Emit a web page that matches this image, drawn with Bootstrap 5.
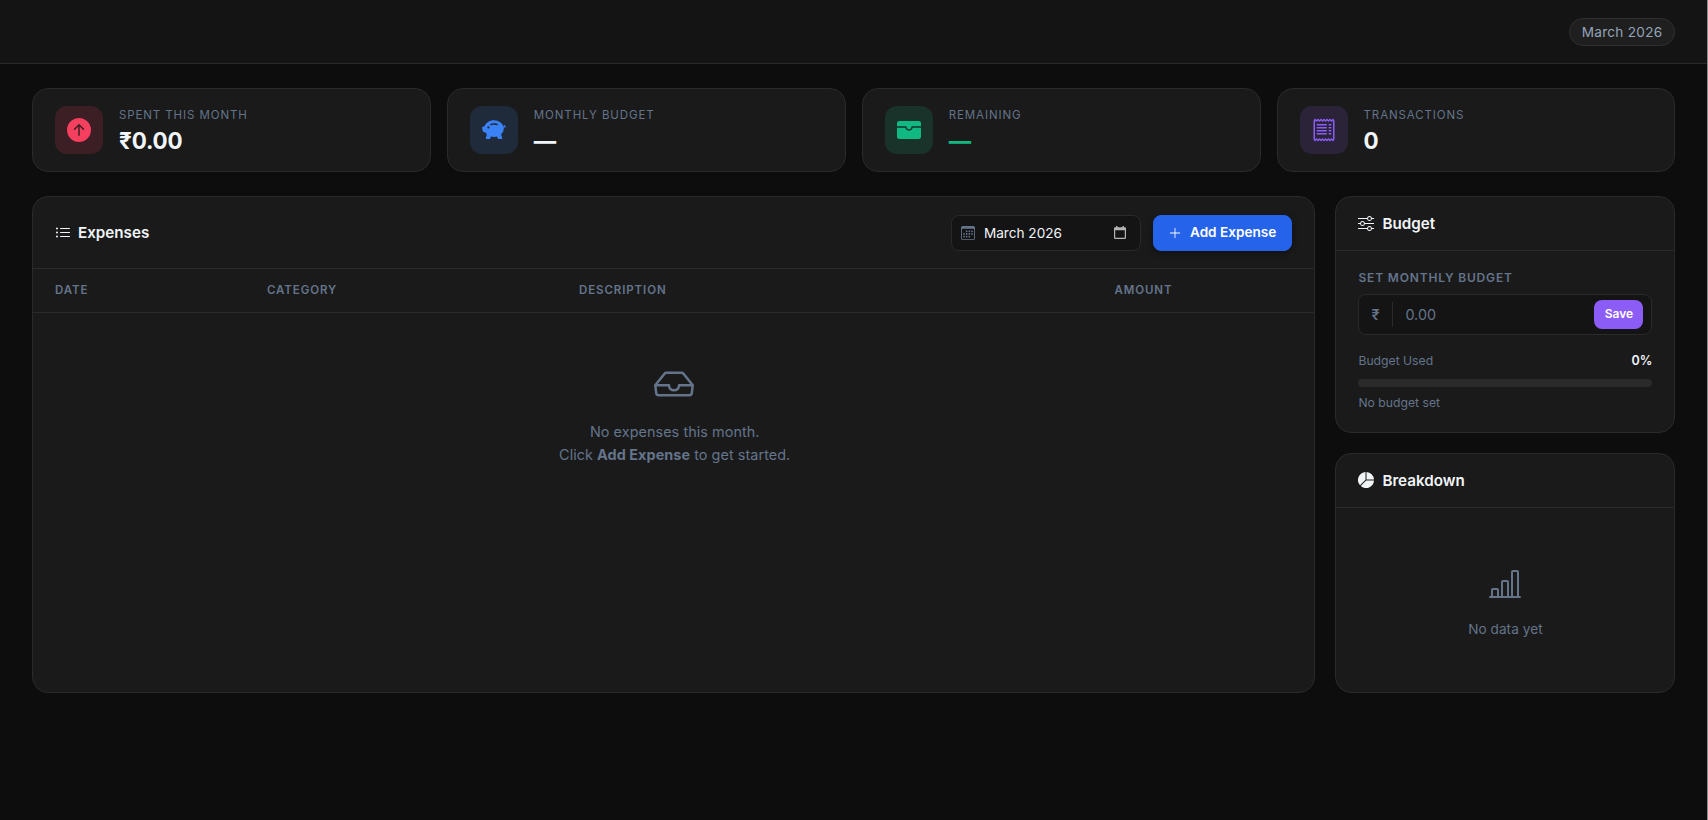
<!DOCTYPE html>
<html lang="en" data-bs-theme="dark">
<head>
<meta charset="utf-8">
<meta name="viewport" content="width=device-width, initial-scale=1">
<title>Expenses</title>
<link href="https://cdn.jsdelivr.net/npm/bootstrap@5.3.0/dist/css/bootstrap.min.css" rel="stylesheet">
<style>
  :root { --line: #2a2a2a; --muted: #64748b; --panel: #1a1a1a; --text: #f1f5f9; }
  body { background: #0d0d0d; color: var(--text); font-family: Inter, "Liberation Sans", sans-serif; font-size: 16px; line-height: 1.5; }
  svg { display: block; fill: currentColor; flex: none; }
  .shell { min-height: 820px; border-right: 1px solid #8a8a8a; }
  .topbar { height: 64px; padding: 0 31.6px 0 32px; background: #141414; border-bottom: 1px solid var(--line); }
  .month-pill { height: 28px; padding: 1px 12px 0; font-size: 13.6px; letter-spacing: .27px; color: #94a3b8; background: #1f1f1f; border: 1px solid #303030; border-radius: 20px; }
  .content { padding: 24px 31.6px 24px 32px; }
  .stats { display: grid; grid-template-columns: repeat(4, 1fr); gap: 16px; margin-bottom: 24px; }
  .panel { background: var(--panel); border: 1px solid var(--line); border-radius: 16px; overflow: hidden; }
  .stat { height: 84px; padding: 0 22px; gap: 16px; }
  .stat-icon { width: 48px; height: 48px; border-radius: 12px; }
  .stat-label { font-size: 11.5px; line-height: 18px; letter-spacing: .89px; color: var(--muted); margin-bottom: 3px; }
  .stat-value { font-size: 22.4px; font-weight: 700; line-height: 27px; letter-spacing: -.15px; }
  .red { color: #f43f5e; background: #3b1f24; } .blue { color: #3b82f6; background: #1f2a3a; }
  .green { color: #10b981; background: #19322a; } .violet { color: #8b5cf6; background: #2b2439; }
  .main-grid { display: grid; grid-template-columns: minmax(0, 1fr) 340px; gap: 20px; height: 497px; }
  .panel-head { padding: 0 22px; border-bottom: 1px solid var(--line); font-size: 15.2px; font-weight: 600; gap: 8px; }
  .expense-head { height: 72px; gap: 7px; }
  .panel-head > span { padding-top: 2px; }
  .side-head { height: 54px; }
  .side-head svg { margin-bottom: 1px; }
  .month-field { width: 190px; height: 36px; padding: 0 14px 0 9px; gap: 9px; background: #141414; border: 1px solid var(--line); border-radius: 8px; color: var(--muted); }
  .month-name { color: var(--text); font-size: 13.6px; font-weight: 400; line-height: 20px; }
  .picker-mark { color: #b4b4b4; }
  .add-btn { width: 139.5px; height: 36px; padding: 0 1px 0 0; gap: 8px; font-size: 13.6px; font-weight: 600; --bs-btn-bg: #2563eb; --bs-btn-border-color: #2563eb; border-radius: 8px; box-shadow: 0 2px 6px rgba(0,0,0,.4); }
  .ledger { table-layout: fixed; width: 100%; border-collapse: collapse; }
  .ledger th { height: 43px; padding: 0 22px; border-bottom: 1px solid var(--line); color: var(--muted); font-size: 11.5px; font-weight: 600; letter-spacing: .9px; }
  .empty { color: var(--muted); text-align: center; }
  .empty-expenses { padding-top: 51px; font-size: 14.4px; line-height: 23px; letter-spacing: .06px; }
  .empty-expenses p { margin: 16px 0 0; padding-left: 2px; }
  .empty-data { font-size: 13.6px; line-height: 20px; padding-top: 60px; }
  .empty-data p { margin: 19px 0 0; letter-spacing: .06px; }
  .budget-body { padding: 17px 22px 0; color: var(--muted); }
  .field-label { font-size: 12px; line-height: 20px; font-weight: 600; letter-spacing: .83px; }
  .budget-field { height: 41px; margin-top: 6px; padding: 0 8px 0 12px; background: #141414; border: 1px solid var(--line); border-radius: 8px; }
  .currency { width: 22px; height: 25px; border-right: 1px solid var(--line); font-size: 14.4px; line-height: 25px; font-weight: 600; }
  .budget-field input { flex: 1; min-width: 0; padding: 0 12px; border: 0; outline: 0; background: transparent; color: var(--text); font-size: 14.4px; }
  .budget-field input::placeholder { color: var(--muted); opacity: 1; }
  .save-btn { width: 49px; height: 29px; padding: 0 0 1px; font-size: 12px; font-weight: 600; --bs-btn-color: #fff; --bs-btn-bg: #8b5cf6; border: 0; border-radius: 8px; }
  .usage { margin-top: 16px; font-size: 12.2px; line-height: 20px; }
  .usage strong { color: var(--text); font-weight: 600; font-size: 12.5px; }
  .meter { --bs-progress-height: 8px; --bs-progress-bg: #2a2a2a; --bs-progress-border-radius: 4px; margin-top: 8px; }
  .hint { margin-top: 6px; font-size: 12.2px; line-height: 20px; }
</style>
</head>
<body>
<div class="shell">
  <header class="topbar d-flex align-items-center justify-content-end">
    <span class="month-pill d-flex align-items-center">March 2026</span>
  </header>

  <main class="content">
    <section class="stats">
      <div class="panel stat d-flex align-items-center">
        <div class="stat-icon red d-flex align-items-center justify-content-center">
          <svg width="24" height="24" viewBox="0 0 16 16"><path d="M16 8A8 8 0 1 0 0 8a8 8 0 0 0 16 0zm-7.5 3.5a.5.5 0 0 1-1 0V5.707L5.354 7.854a.5.5 0 1 1-.708-.708l3-3a.5.5 0 0 1 .708 0l3 3a.5.5 0 0 1-.708.708L8.5 5.707V11.5z"/></svg>
        </div>
        <div><div class="stat-label">SPENT THIS MONTH</div><div class="stat-value">₹0.00</div></div>
      </div>
      <div class="panel stat d-flex align-items-center">
        <div class="stat-icon blue d-flex align-items-center justify-content-center">
          <svg width="24" height="24" viewBox="0 0 16 16"><path d="M7.964 1.527c-2.977 0-5.571 1.704-6.32 4.125h-.55A1 1 0 0 0 .11 6.824l.254 1.46a1.5 1.5 0 0 0 1.478 1.243h.263c.3.513.688.978 1.145 1.382l-.729 2.477a.5.5 0 0 0 .48.641h2a.5.5 0 0 0 .471-.332l.482-1.351c.635.173 1.31.267 2.011.267.707 0 1.388-.095 2.028-.272l.543 1.372a.5.5 0 0 0 .465.316h2a.5.5 0 0 0 .478-.645l-.761-2.506C13.81 9.895 14.5 8.559 14.5 7.069c0-.145-.007-.29-.02-.431.261-.11.508-.266.705-.444.315.306.815.306.815-.417 0 .223-.5.223-.461-.026a.95.95 0 0 0 .09-.255.7.7 0 0 0-.202-.645.58.58 0 0 0-.707-.098.735.735 0 0 0-.375.562c-.024.243.082.48.32.654a2.112 2.112 0 0 1-.259.153c-.534-2.664-3.284-4.595-6.442-4.595Zm7.173 3.876a.565.565 0 0 1-.098.21.704.704 0 0 1-.044-.025c-.146-.09-.157-.175-.152-.223a.236.236 0 0 1 .117-.173c.049-.027.08-.021.113.012a.202.202 0 0 1 .064.199Zm-8.999-.65a.5.5 0 1 1-.276-.96A7.613 7.613 0 0 1 7.964 3.5c.763 0 1.497.11 2.18.315a.5.5 0 1 1-.287.958A6.602 6.602 0 0 0 7.964 4.5c-.64 0-1.255.09-1.826.254ZM5 6.25a.75.75 0 1 1-1.5 0 .75.75 0 0 1 1.5 0Z"/></svg>
        </div>
        <div><div class="stat-label">MONTHLY BUDGET</div><div class="stat-value">—</div></div>
      </div>
      <div class="panel stat d-flex align-items-center">
        <div class="stat-icon green d-flex align-items-center justify-content-center">
          <svg width="24" height="24" viewBox="0 0 16 16"><path d="M1.5 2A1.5 1.5 0 0 0 0 3.5v2h6a.5.5 0 0 1 .5.5c0 .253.08.644.306.958.207.288.557.542 1.194.542.637 0 .987-.254 1.194-.542.226-.314.306-.705.306-.958a.5.5 0 0 1 .5-.5h6v-2A1.5 1.5 0 0 0 14.5 2h-13z"/><path d="M16 6.5h-5.551a2.678 2.678 0 0 1-.443 1.042C9.613 8.088 8.963 8.5 8 8.5c-.963 0-1.613-.412-2.006-.958A2.679 2.679 0 0 1 5.551 6.5H0v6A1.5 1.5 0 0 0 1.5 14h13a1.5 1.5 0 0 0 1.5-1.5v-6z"/></svg>
        </div>
        <div><div class="stat-label">REMAINING</div><div class="stat-value" style="color:#10b981">—</div></div>
      </div>
      <div class="panel stat d-flex align-items-center">
        <div class="stat-icon violet d-flex align-items-center justify-content-center">
          <svg width="24" height="24" viewBox="0 0 16 16"><path d="M1.92.506a.5.5 0 0 1 .434.14L3 1.293l.646-.647a.5.5 0 0 1 .708 0L5 1.293l.646-.647a.5.5 0 0 1 .708 0L7 1.293l.646-.647a.5.5 0 0 1 .708 0L9 1.293l.646-.647a.5.5 0 0 1 .708 0l.646.647.646-.647a.5.5 0 0 1 .708 0l.646.647.646-.647a.5.5 0 0 1 .801.13l.5 1A.5.5 0 0 1 15 2v12a.5.5 0 0 1-.053.224l-.5 1a.5.5 0 0 1-.8.13L13 14.707l-.646.647a.5.5 0 0 1-.708 0L11 14.707l-.646.647a.5.5 0 0 1-.708 0L9 14.707l-.646.647a.5.5 0 0 1-.708 0L7 14.707l-.646.647a.5.5 0 0 1-.708 0L5 14.707l-.646.647a.5.5 0 0 1-.708 0L3 14.707l-.646.647a.5.5 0 0 1-.801-.13l-.5-1A.5.5 0 0 1 1 14V2a.5.5 0 0 1 .053-.224l.5-1a.5.5 0 0 1 .367-.27zm.217 1.338L2 2.118v11.764l.137.274.51-.51a.5.5 0 0 1 .707 0l.646.647.646-.646a.5.5 0 0 1 .708 0l.646.646.646-.646a.5.5 0 0 1 .708 0l.646.646.646-.646a.5.5 0 0 1 .708 0l.646.646.646-.646a.5.5 0 0 1 .708 0l.646.646.646-.646a.5.5 0 0 1 .708 0l.509.509.137-.274V2.118l-.137-.274-.51.51a.5.5 0 0 1-.707 0L12 1.707l-.646.647a.5.5 0 0 1-.708 0L10 1.707l-.646.647a.5.5 0 0 1-.708 0L8 1.707l-.646.647a.5.5 0 0 1-.708 0L6 1.707l-.646.647a.5.5 0 0 1-.708 0L4 1.707l-.646.647a.5.5 0 0 1-.708 0l-.509-.51z"/><path d="M3 4.5a.5.5 0 0 1 .5-.5h6a.5.5 0 1 1 0 1h-6a.5.5 0 0 1-.5-.5zm0 2a.5.5 0 0 1 .5-.5h6a.5.5 0 1 1 0 1h-6a.5.5 0 0 1-.5-.5zm0 2a.5.5 0 0 1 .5-.5h6a.5.5 0 1 1 0 1h-6a.5.5 0 0 1-.5-.5zm0 2a.5.5 0 0 1 .5-.5h6a.5.5 0 0 1 0 1h-6a.5.5 0 0 1-.5-.5zm8-6a.5.5 0 0 1 .5-.5h1a.5.5 0 0 1 0 1h-1a.5.5 0 0 1-.5-.5zm0 2a.5.5 0 0 1 .5-.5h1a.5.5 0 0 1 0 1h-1a.5.5 0 0 1-.5-.5zm0 2a.5.5 0 0 1 .5-.5h1a.5.5 0 0 1 0 1h-1a.5.5 0 0 1-.5-.5zm0 2a.5.5 0 0 1 .5-.5h1a.5.5 0 0 1 0 1h-1a.5.5 0 0 1-.5-.5z"/></svg>
        </div>
        <div><div class="stat-label">TRANSACTIONS</div><div class="stat-value">0</div></div>
      </div>
    </section>

    <section class="main-grid">
      <div class="panel">
        <div class="panel-head expense-head d-flex align-items-center">
          <svg width="16" height="16" viewBox="0 0 16 16"><path fill-rule="evenodd" d="M5 11.5a.5.5 0 0 1 .5-.5h9a.5.5 0 0 1 0 1h-9a.5.5 0 0 1-.5-.5zm0-4a.5.5 0 0 1 .5-.5h9a.5.5 0 0 1 0 1h-9a.5.5 0 0 1-.5-.5zm0-4a.5.5 0 0 1 .5-.5h9a.5.5 0 0 1 0 1h-9a.5.5 0 0 1-.5-.5zm-3 1a1 1 0 1 0 0-2 1 1 0 0 0 0 2zm0 4a1 1 0 1 0 0-2 1 1 0 0 0 0 2zm0 4a1 1 0 1 0 0-2 1 1 0 0 0 0 2z"/></svg>
          <span>Expenses</span>
          <div class="d-flex align-items-center ms-auto" style="gap:12px">
            <div class="month-field d-flex align-items-center">
              <svg width="14" height="14" viewBox="0 0 16 16"><path d="M14 0H2a2 2 0 0 0-2 2v12a2 2 0 0 0 2 2h12a2 2 0 0 0 2-2V2a2 2 0 0 0-2-2zM1 3.857C1 3.384 1.448 3 2 3h12c.552 0 1 .384 1 .857v10.286c0 .473-.448.857-1 .857H2c-.552 0-1-.384-1-.857V3.857z"/><path d="M6.5 7a1 1 0 1 0 0-2 1 1 0 0 0 0 2zm3 0a1 1 0 1 0 0-2 1 1 0 0 0 0 2zm3 0a1 1 0 1 0 0-2 1 1 0 0 0 0 2zm-9 3a1 1 0 1 0 0-2 1 1 0 0 0 0 2zm3 0a1 1 0 1 0 0-2 1 1 0 0 0 0 2zm3 0a1 1 0 1 0 0-2 1 1 0 0 0 0 2zm3 0a1 1 0 1 0 0-2 1 1 0 0 0 0 2zm-9 3a1 1 0 1 0 0-2 1 1 0 0 0 0 2zm3 0a1 1 0 1 0 0-2 1 1 0 0 0 0 2zm3 0a1 1 0 1 0 0-2 1 1 0 0 0 0 2z"/></svg>
              <span class="month-name">March 2026</span>
              <svg class="picker-mark ms-auto" width="12" height="13" viewBox="0 0 12 13"><path fill-rule="evenodd" d="M2 0h1.5v1.2h5V0H10v1.2h.8A1.2 1.2 0 0 1 12 2.4v9.4a1.2 1.2 0 0 1-1.2 1.2H1.2A1.2 1.2 0 0 1 0 11.8V2.4a1.2 1.2 0 0 1 1.2-1.2H2V0zM1.2 4.3v7.5h9.6V4.3H1.2z"/></svg>
            </div>
            <button type="button" class="btn btn-primary add-btn d-flex align-items-center justify-content-center">
              <svg width="14" height="14" viewBox="0 0 16 16"><path d="M8 2a.5.5 0 0 1 .5.5v5h5a.5.5 0 0 1 0 1h-5v5a.5.5 0 0 1-1 0v-5h-5a.5.5 0 0 1 0-1h5v-5A.5.5 0 0 1 8 2z"/></svg>
              Add Expense
            </button>
          </div>
        </div>
        <table class="ledger">
          <colgroup><col style="width:212px"><col style="width:312px"><col><col style="width:200px"><col style="width:120px"></colgroup>
          <thead><tr><th>DATE</th><th>CATEGORY</th><th>DESCRIPTION</th><th class="text-end">AMOUNT</th><th></th></tr></thead>
        </table>
        <div class="empty empty-expenses">
          <svg class="mx-auto" width="40" height="40" viewBox="0 0 16 16"><path d="M4.98 4a.5.5 0 0 0-.39.188L1.54 8H6a.5.5 0 0 1 .5.5 1.5 1.5 0 1 0 3 0A.5.5 0 0 1 10 8h4.46l-3.05-3.812A.5.5 0 0 0 11.02 4H4.98zm9.954 5H10.45a2.5 2.5 0 0 1-4.9 0H1.066l.32 2.562a.5.5 0 0 0 .497.438h12.234a.5.5 0 0 0 .496-.438L14.933 9zM3.809 3.563A1.5 1.5 0 0 1 4.981 3h6.038a1.5 1.5 0 0 1 1.172.563l3.7 4.625a.5.5 0 0 1 .105.374l-.39 3.124A1.5 1.5 0 0 1 14.117 13H1.883a1.5 1.5 0 0 1-1.489-1.314l-.39-3.124a.5.5 0 0 1 .106-.374l3.7-4.625z"/></svg>
          <p>No expenses this month.<br>Click <strong>Add Expense</strong> to get started.</p>
        </div>
      </div>

      <div class="d-flex flex-column" style="gap:20px">
        <div class="panel" style="height:237px">
          <div class="panel-head side-head d-flex align-items-center">
            <svg width="16" height="16" viewBox="0 0 16 16"><path fill-rule="evenodd" d="M11.5 2a1.5 1.5 0 1 0 0 3 1.5 1.5 0 0 0 0-3zM9.05 3a2.5 2.5 0 0 1 4.9 0H16v1h-2.05a2.5 2.5 0 0 1-4.9 0H0V3h9.05zM4.5 7a1.5 1.5 0 1 0 0 3 1.5 1.5 0 0 0 0-3zM2.05 8a2.5 2.5 0 0 1 4.9 0H16v1H6.95a2.5 2.5 0 0 1-4.9 0H0V8h2.05zm9.45 4a1.5 1.5 0 1 0 0 3 1.5 1.5 0 0 0 0-3zm-2.45 1a2.5 2.5 0 0 1 4.9 0H16v1h-2.05a2.5 2.5 0 0 1-4.9 0H0v-1h9.05z"/></svg>
            <span>Budget</span>
          </div>
          <div class="budget-body">
            <div class="field-label">SET MONTHLY BUDGET</div>
            <div class="budget-field d-flex align-items-center">
              <span class="currency">₹</span>
              <input type="text" placeholder="0.00" aria-label="Monthly budget">
              <button type="button" class="btn save-btn">Save</button>
            </div>
            <div class="usage d-flex justify-content-between"><span>Budget Used</span><strong>0%</strong></div>
            <div class="progress meter"><div class="progress-bar" style="width:0%"></div></div>
            <div class="hint">No budget set</div>
          </div>
        </div>
        <div class="panel flex-grow-1">
          <div class="panel-head side-head d-flex align-items-center">
            <svg width="16" height="16" viewBox="0 0 16 16"><path d="M15.985 8.5H8.207l-5.5 5.5a8 8 0 0 0 13.277-5.5zM2 13.292A8 8 0 0 1 7.5.015v7.778l-5.5 5.5zM8.5.015V7.5h7.485A8.001 8.001 0 0 0 8.5.015z"/></svg>
            <span>Breakdown</span>
          </div>
          <div class="empty empty-data">
            <svg class="mx-auto" width="32" height="32" viewBox="0 0 16 16"><path d="M11 2a1 1 0 0 1 1-1h2a1 1 0 0 1 1 1v12h.5a.5.5 0 0 1 0 1H.5a.5.5 0 0 1 0-1H1v-3a1 1 0 0 1 1-1h2a1 1 0 0 1 1 1v3h1V7a1 1 0 0 1 1-1h2a1 1 0 0 1 1 1v7h1V2zm1 12h2V2h-2v12zm-3 0V7H7v7h2zm-5 0v-3H2v3h2z"/></svg>
            <p>No data yet</p>
          </div>
        </div>
      </div>
    </section>
  </main>
</div>
<script src="https://cdn.jsdelivr.net/npm/bootstrap@5.3.0/dist/js/bootstrap.bundle.min.js"></script>
</body>
</html>
